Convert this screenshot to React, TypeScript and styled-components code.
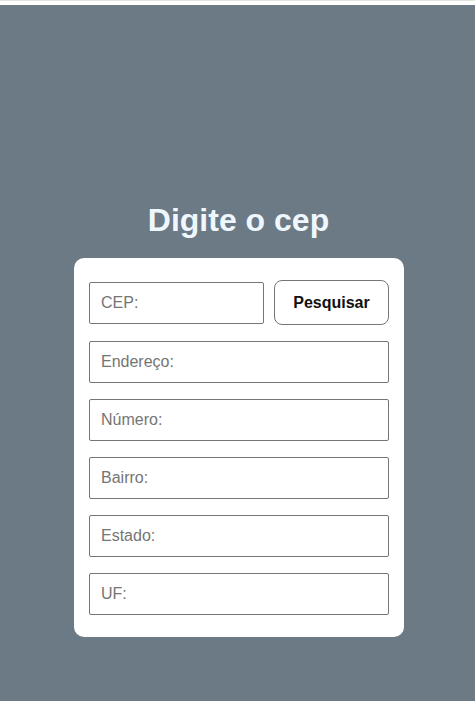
import React from "react";
import styled, { createGlobalStyle } from "styled-components";

const Global = createGlobalStyle`
  html, body { margin: 0; padding: 0; background: #ffffff; }
  body { font-family: "Liberation Sans", Arial, sans-serif; }
  * { box-sizing: border-box; }
`;

const TopStrip = styled.div`
  height: 5px;
  background: #ffffff;
  border-top: 1px solid #dfe6dd;
`;

const Main = styled.main`
  height: calc(100vh - 5px);
  background: #6c7a86;
  display: flex;
  flex-direction: column;
  align-items: center;
  padding-top: 197px;
`;

const Title = styled.h1`
  margin: 0 0 19px 0;
  font-size: 32px;
  font-weight: bold;
  color: #eef7fd;
  line-height: 37px;
  padding-left: 2px;
`;

const Card = styled.form`
  width: 330px;
  background: #ffffff;
  border-radius: 10px;
  padding: 22px 15px;
  display: flex;
  flex-direction: column;
  gap: 16px;
  margin-left: 3px;
`;

const Row = styled.div`
  display: flex;
  align-items: center;
  gap: 10px;
`;

const Field = styled.input<{ $w?: number }>`
  width: ${(p) => (p.$w ? `${p.$w}px` : "100%")};
  height: 42px;
  border: 1px solid #767676;
  border-radius: 2px;
  padding: 0 11px;
  font-family: "Liberation Sans", Arial, sans-serif;
  font-size: 16px;
  color: #222;
  background: #fff;
  outline: none;
  &::placeholder { color: #757575; }
`;

const Button = styled.button`
  width: 115px;
  height: 45px;
  background: #ffffff;
  border: 1px solid #767676;
  border-radius: 8px;
  font-family: "Liberation Sans", Arial, sans-serif;
  font-size: 16px;
  font-weight: bold;
  color: #111;
  cursor: pointer;
`;

export default function App() {
  const fields = ["Endereço:", "Número:", "Bairro:", "Estado:", "UF:"];
  return (
    <>
      <Global />
      <TopStrip />
      <Main>
        <Title>Digite o cep</Title>
        <Card onSubmit={(e) => e.preventDefault()}>
          <Row>
            <Field $w={175} placeholder="CEP:" />
            <Button type="button">Pesquisar</Button>
          </Row>
          {fields.map((f) => (
            <Field key={f} placeholder={f} />
          ))}
        </Card>
      </Main>
    </>
  );
}
